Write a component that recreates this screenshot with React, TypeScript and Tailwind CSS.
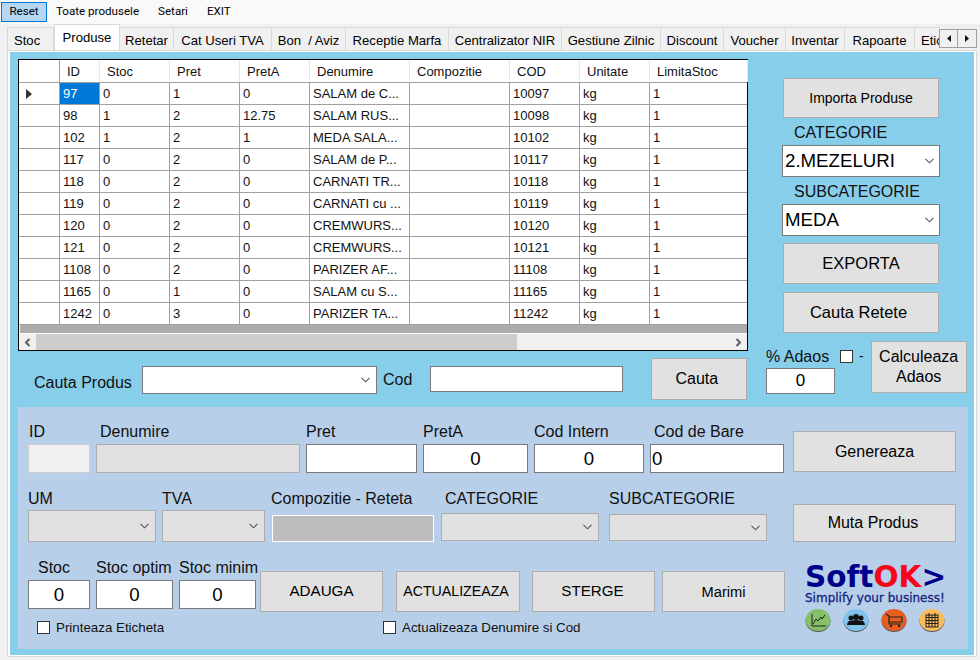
import React from 'react';

const sans = "font-['Liberation_Sans',Arial,sans-serif]";
const btn = "bg-[#e1e1e1] border border-[#adadad] text-black flex items-center justify-center text-center shrink-0";
const inputBox = "bg-white border border-[#7a7a7a] text-black shrink-0 flex items-center";
const disabledBox = "bg-[#e1e1e1] border border-[#adadad] shrink-0 flex items-center justify-end";

const tabs = [
    { label: 'Stoc', cls: 'w-[47px]' },
    { label: 'Retetar', cls: 'w-[54px]' },
    { label: 'Cat Useri TVA', cls: 'w-[98px]' },
    { label: 'Bon  / Aviz', cls: 'w-[74px]' },
    { label: 'Receptie Marfa', cls: 'w-[103px]' },
    { label: 'Centralizator NIR', cls: 'w-[113px]' },
    { label: 'Gestiune Zilnic', cls: 'w-[99px]' },
    { label: 'Discount', cls: 'w-[63px]' },
    { label: 'Voucher', cls: 'w-[62px]' },
    { label: 'Inventar', cls: 'w-[59px]' },
    { label: 'Rapoarte', cls: 'w-[70px]' },
];

const columns = [
    { label: 'ID', cls: 'w-[40px]' },
    { label: 'Stoc', cls: 'w-[70px]' },
    { label: 'Pret', cls: 'w-[70px]' },
    { label: 'PretA', cls: 'w-[70px]' },
    { label: 'Denumire', cls: 'w-[100px]' },
    { label: 'Compozitie', cls: 'w-[100px]' },
    { label: 'COD', cls: 'w-[70px]' },
    { label: 'Unitate', cls: 'w-[70px]' },
    { label: 'LimitaStoc', cls: 'w-[98px]' },
];

const rows = [
    ['97', '0', '1', '0', 'SALAM de C...', '', '10097', 'kg', '1'],
    ['98', '1', '2', '12.75', 'SALAM RUS...', '', '10098', 'kg', '1'],
    ['102', '1', '2', '1', 'MEDA SALA...', '', '10102', 'kg', '1'],
    ['117', '0', '2', '0', 'SALAM de P...', '', '10117', 'kg', '1'],
    ['118', '0', '2', '0', 'CARNATI TR...', '', '10118', 'kg', '1'],
    ['119', '0', '2', '0', 'CARNATI cu ...', '', '10119', 'kg', '1'],
    ['120', '0', '2', '0', 'CREMWURS...', '', '10120', 'kg', '1'],
    ['121', '0', '2', '0', 'CREMWURS...', '', '10121', 'kg', '1'],
    ['1108', '0', '2', '0', 'PARIZER AF...', '', '11108', 'kg', '1'],
    ['1165', '0', '1', '0', 'SALAM cu S...', '', '11165', 'kg', '1'],
    ['1242', '0', '3', '0', 'PARIZER TA...', '', '11242', 'kg', '1'],
];

const Chevron = ({ cls = 'mr-[6px]' }: { cls?: string }) => (
    <svg width="9" height="6" viewBox="0 0 9 6" className={`shrink-0 ${cls}`}>
        <path d="M0.5 0.8 L4.5 4.8 L8.5 0.8" fill="none" stroke="#555" strokeWidth="1.1" />
    </svg>
);

const CheckBox = () => <span className="block w-[13px] h-[13px] bg-white border border-[#333] shrink-0" />;

const DataGrid = () => (
    <div className="w-[730px] h-[292px] border border-black bg-white flex flex-col">
        <div className="flex h-[23px] border-b border-[#a0a0a0] pl-[1px]">
            <div className="w-[40px] border-r border-[#a0a0a0] shrink-0" />
            {columns.map((c) => (
                <div key={c.label} className={`${c.cls} shrink-0 border-r border-[#e6e6e6] pl-[7px] text-[13px] leading-[24px] text-[#111]`}>
                    {c.label}
                </div>
            ))}
        </div>
        {rows.map((row, i) => (
            <div key={row[0]} className="flex h-[22px] border-b border-[#a0a0a0] pl-[1px]">
                <div className="w-[40px] shrink-0 border-r border-[#a0a0a0] flex items-center pl-[6px]">
                    {i === 0 && (
                        <svg width="6" height="10" viewBox="0 0 6 10"><path d="M0 0 L6 5 L0 10 Z" fill="#333" /></svg>
                    )}
                </div>
                {row.map((cell, j) => (
                    <div
                        key={j}
                        className={`${columns[j].cls} shrink-0 pl-[3px] text-[13px] leading-[22px] whitespace-nowrap overflow-hidden ${j < 8 ? 'border-r border-[#a0a0a0]' : ''} ${i === 0 && j === 0 ? 'bg-[#0078d7] text-white' : 'text-[#111]'}`}
                    >
                        {cell}
                    </div>
                ))}
            </div>
        ))}
        <div className="h-[8px] bg-[#ababab] ml-[1px]" />
        <div className="h-[16px] mt-[1px] bg-[#f0f0f0] flex items-center">
            <div className="w-[17px] flex justify-center">
                <svg width="7" height="9" viewBox="0 0 7 9"><path d="M5.5 1 L2 4.5 L5.5 8" fill="none" stroke="#606060" strokeWidth="2" /></svg>
            </div>
            <div className="w-[481px] h-[16px] bg-[#cdcdcd]" />
            <div className="flex-1" />
            <div className="w-[17px] flex justify-center">
                <svg width="7" height="9" viewBox="0 0 7 9"><path d="M1.5 1 L5 4.5 L1.5 8" fill="none" stroke="#606060" strokeWidth="2" /></svg>
            </div>
        </div>
    </div>
);

const Logo = () => (
    <div className="flex flex-col w-[142px] ml-[20px] mt-[-14px]">
        <div className="font-['DejaVu_Sans',sans-serif] font-bold text-[29.5px] leading-[28px] text-[#00008b] whitespace-nowrap">
            Soft<span className="text-[#f5061d]">OK</span>&gt;
        </div>
        <div className="font-['DejaVu_Sans',sans-serif] text-[12px] leading-[15px] text-[#14237f] whitespace-nowrap [-webkit-text-stroke:0.3px_#14237f]">
            Simplify your business!
        </div>
        <div className="flex gap-[12px] mt-[3px]">
            <svg width="26" height="23" viewBox="0 0 26 23">
                <ellipse cx="13" cy="12" rx="12.5" ry="11" fill="#555" />
                <ellipse cx="13" cy="11" rx="12.5" ry="11" fill="#86c06b" />
                <path d="M7 5 V17 H21" fill="none" stroke="#222" strokeWidth="1" />
                <path d="M8 15 L11 10 L13 12 L16 8 L17 10 L20 6" fill="none" stroke="#222" strokeWidth="1" />
            </svg>
            <svg width="26" height="23" viewBox="0 0 26 23">
                <ellipse cx="13" cy="12" rx="12.5" ry="11" fill="#555" />
                <ellipse cx="13" cy="11" rx="12.5" ry="11" fill="#7fc4ea" />
                <circle cx="8" cy="9" r="2.5" fill="#111" />
                <circle cx="18" cy="9" r="2.5" fill="#111" />
                <circle cx="13" cy="8" r="3" fill="#111" />
                <path d="M4 16 Q5 11 8 12 Q13 10 18 12 Q21 11 22 16 Z" fill="#111" />
            </svg>
            <svg width="26" height="23" viewBox="0 0 26 23">
                <ellipse cx="13" cy="12" rx="12.5" ry="11" fill="#555" />
                <ellipse cx="13" cy="11" rx="12.5" ry="11" fill="#e85d20" />
                <path d="M5 5 L8 7 V15 H20 M8 8 H21 V13 H8" fill="none" stroke="#222" strokeWidth="1.2" />
                <circle cx="10" cy="17" r="1.2" fill="#222" />
                <circle cx="18" cy="17" r="1.2" fill="#222" />
            </svg>
            <svg width="26" height="23" viewBox="0 0 26 23">
                <ellipse cx="13" cy="12" rx="12.5" ry="11" fill="#555" />
                <ellipse cx="13" cy="11" rx="12.5" ry="11" fill="#fbbc5c" />
                <rect x="7" y="6" width="12" height="12" fill="none" stroke="#222" strokeWidth="1" />
                <path d="M7 8.5 H19 M7 11.5 H19 M7 14.5 H19 M10 6 V18 M13 6 V18 M16 6 V18 M10 4 V7 M16 4 V7" stroke="#222" strokeWidth="1" />
            </svg>
        </div>
    </div>
);

const App: React.FC = () => {
    return (
        <div className={`${sans} w-[980px] h-[660px] bg-[#f0f0f0] overflow-hidden flex flex-col`}>
            {/* menu */}
            <div className="h-[24px] bg-[#f9f9f9] flex items-center pl-[1px] text-[11.6px] font-['Roboto',sans-serif] text-black shrink-0">
                <div className="w-[46px] h-[20px] bg-[#b5d7f3] border border-[#0078d7] flex items-center justify-center">Reset</div>
                <span className="ml-[9px]">Toate produsele</span>
                <span className="ml-[19px]">Setari</span>
                <span className="ml-[19px]">EXIT</span>
            </div>

            {/* tabs */}
            <div className="h-[26px] flex items-end pl-[7px] text-[13.1px] text-black shrink-0 relative">
                <div className={`${tabs[0].cls} h-[23px] bg-[#f0f0f0] border border-[#d9d9d9] border-b-0 pl-[6px] leading-[25px]`}>{tabs[0].label}</div>
                <div className="w-[66px] h-[26px] bg-white border border-[#d9d9d9] border-b-0 text-center leading-[26px]">Produse</div>
                {tabs.slice(1).map((t) => (
                    <div key={t.label} className={`${t.cls} h-[23px] bg-[#f0f0f0] border-r border-t border-[#d9d9d9] text-center leading-[25px] whitespace-pre shrink-0`}>{t.label}</div>
                ))}
                <div className="w-[25px] h-[23px] bg-[#f0f0f0] border-t border-[#d9d9d9] pl-[6px] leading-[25px] whitespace-nowrap shrink-0">Etic</div>
                <div className="absolute left-[939px] top-[5px] flex">
                    <div className="w-[19px] h-[19px] bg-[#f0f0f0] border border-[#a0a0a0] flex items-center justify-center">
                        <svg width="4" height="7" viewBox="0 0 4 7"><path d="M4 0 L0 3.5 L4 7 Z" fill="#111" /></svg>
                    </div>
                    <div className="w-[19px] h-[19px] bg-[#f0f0f0] border border-l-0 border-[#a0a0a0] flex items-center justify-center">
                        <svg width="4" height="7" viewBox="0 0 4 7"><path d="M0 0 L4 3.5 L0 7 Z" fill="#111" /></svg>
                    </div>
                </div>
            </div>

            {/* tab page */}
            <div className="ml-[7px] w-[970px] h-[607px] border border-[#d9d9d9] bg-white pl-[2px] pt-[1px] shrink-0">
                <div className="w-[964px] h-[603px] bg-[#87ceeb] pl-[8px] pt-[7px] flex flex-col">
                    <div className="flex h-[348px] shrink-0">
                        <div className="w-[730px] shrink-0 flex flex-col">
                            <DataGrid />
                            <div className="flex items-start">
                                <span className="ml-[16px] mt-[20px] w-[108px] text-[16px] text-[#111] whitespace-nowrap">Cauta Produs</span>
                                <div className={`${inputBox} mt-[15px] w-[235px] h-[28px] justify-end`}>
                                    <Chevron />
                                </div>
                                <span className="ml-[6px] mt-[17px] text-[16px] text-[#111]">Cod</span>
                                <div className={`${inputBox} ml-[18px] mt-[15px] w-[193px] h-[26px]`} />
                                <div className={`${btn} ml-[28px] mt-[7px] w-[96px] h-[42px] text-[16px] pr-[5px]`}>Cauta</div>
                            </div>
                        </div>
                        <div className="flex-1 flex flex-col">
                            <div className={`${btn} ml-[35px] mt-[19px] w-[156px] h-[40px] text-[14px]`}>Importa Produse</div>
                            <span className="ml-[46px] mt-[6px] text-[16px] leading-[18px] text-[#111]">CATEGORIE</span>
                            <div className={`${inputBox} ml-[34px] mt-[3px] w-[158px] h-[32px] justify-between pl-[2px] text-[18.67px]`}>
                                2.MEZELURI<Chevron cls="mr-[5px]" />
                            </div>
                            <span className="ml-[46px] mt-[6px] text-[16px] leading-[18px] text-[#111]">SUBCATEGORIE</span>
                            <div className={`${inputBox} ml-[34px] mt-[3px] w-[158px] h-[32px] justify-between pl-[2px] text-[18.67px]`}>
                                MEDA<Chevron cls="mr-[5px]" />
                            </div>
                            <div className={`${btn} ml-[35px] mt-[7px] w-[156px] h-[41px] text-[16.5px]`}>EXPORTA</div>
                            <div className={`${btn} ml-[35px] mt-[8px] w-[156px] h-[41px] text-[16.5px] pr-[5px]`}>Cauta Retete</div>
                            <div className="flex ml-[18px] mt-[7px]">
                                <div className="flex flex-col w-[70px] pt-[8px]">
                                    <span className="text-[16px] leading-[18px] text-[#111] whitespace-nowrap">% Adaos</span>
                                    <div className={`${inputBox} mt-[2px] w-[69px] h-[26px] justify-center text-[17px]`}>0</div>
                                </div>
                                <div className="ml-[4px] mt-[10px]"><CheckBox /></div>
                                <span className="ml-[6px] mt-[6px] text-[14px] text-[#111]">-</span>
                                <div className={`${btn} ml-[7px] mt-[1px] w-[96px] h-[52px] text-[16px] leading-[20px]`}>Calculeaza<br />Adaos</div>
                            </div>
                        </div>
                    </div>

                    {/* product form */}
                    <div className="w-[950px] h-[242px] bg-[#b8cfe9] shrink-0 flex flex-col text-[16px] text-[#111] pl-[10px]">
                        <div className="flex mt-[16px] h-[18px] leading-[18px]">
                            <span className="ml-[1px] w-[71px]">ID</span>
                            <span className="w-[206px]">Denumire</span>
                            <span className="w-[117px]">Pret</span>
                            <span className="w-[111px]">PretA</span>
                            <span className="w-[120px]">Cod Intern</span>
                            <span>Cod de Bare</span>
                        </div>
                        <div className="flex items-start h-[45px]">
                            <div className="w-[62px] h-[29px] mt-[3px] bg-[#f0f0f0] border border-[#cfcfcf] shrink-0" />
                            <div className="ml-[6px] w-[204px] h-[29px] mt-[3px] bg-[#e1e1e1] border border-[#adadad] shrink-0" />
                            <div className={`${inputBox} ml-[6px] mt-[3px] w-[111px] h-[29px]`} />
                            <div className={`${inputBox} ml-[6px] mt-[3px] w-[105px] h-[29px] justify-center text-[18.67px]`}>0</div>
                            <div className={`${inputBox} ml-[6px] mt-[3px] w-[110px] h-[29px] justify-center text-[18.67px]`}>0</div>
                            <div className={`${inputBox} ml-[6px] mt-[3px] w-[134px] h-[29px] pl-[1px] text-[18.67px]`}>0</div>
                            <div className={`${btn} ml-[9px] mt-[-10px] w-[163px] h-[41px]`}>Genereaza</div>
                        </div>
                        <div className="flex mt-[4px] h-[18px] leading-[18px]">
                            <span className="w-[134px]">UM</span>
                            <span className="w-[109px]">TVA</span>
                            <span className="w-[174px]">Compozitie - Reteta</span>
                            <span className="w-[164px]">CATEGORIE</span>
                            <span>SUBCATEGORIE</span>
                        </div>
                        <div className="flex items-start h-[52px]">
                            <div className={`${disabledBox} mt-[2px] w-[128px] h-[32px]`}><Chevron /></div>
                            <div className={`${disabledBox} ml-[6px] mt-[2px] w-[103px] h-[32px]`}><Chevron /></div>
                            <div className="ml-[7px] mt-[7px] w-[162px] h-[27px] bg-[#bdbdbd] border border-white shrink-0" />
                            <div className={`${disabledBox} ml-[7px] mt-[5px] w-[158px] h-[28px]`}><Chevron /></div>
                            <div className={`${disabledBox} ml-[10px] mt-[6px] w-[158px] h-[27px]`}><Chevron /></div>
                            <div className={`${btn} ml-[26px] mt-[-4px] w-[163px] h-[38px] pr-[3px]`}>Muta Produs</div>
                        </div>
                        <div className="flex h-[18px] leading-[18px] mt-[-1px]">
                            <span className="ml-[10px] w-[58px]">Stoc</span>
                            <span className="w-[83px]">Stoc optim</span>
                            <span>Stoc minim</span>
                        </div>
                        <div className="flex items-start h-[43px]">
                            <div className={`${inputBox} mt-[3px] w-[62px] h-[29px] justify-center text-[18.67px]`}>0</div>
                            <div className={`${inputBox} ml-[6px] mt-[3px] w-[77px] h-[29px] justify-center text-[18.67px]`}>0</div>
                            <div className={`${inputBox} ml-[6px] mt-[3px] w-[77px] h-[29px] justify-center text-[18.67px]`}>0</div>
                            <div className={`${btn} ml-[4px] mt-[-6px] w-[123px] h-[41px] text-[15.2px]`}>ADAUGA</div>
                            <div className={`${btn} ml-[13px] mt-[-6px] w-[124px] h-[41px] text-[14.2px] pr-[4px]`}>ACTUALIZEAZA</div>
                            <div className={`${btn} ml-[12px] mt-[-6px] w-[123px] h-[41px] text-[15.2px] pr-[2px]`}>STERGE</div>
                            <div className={`${btn} ml-[7px] mt-[-6px] w-[123px] h-[41px] text-[14.67px]`}>Marimi</div>
                            <Logo />
                        </div>
                        <div className="flex items-center h-[13px] mt-[1px] text-[13.33px]">
                            <span className="ml-[9px]"><CheckBox /></span>
                            <span className="ml-[6px] w-[327px] whitespace-nowrap">Printeaza Eticheta</span>
                            <CheckBox />
                            <span className="ml-[6px] whitespace-nowrap">Actualizeaza Denumire si Cod</span>
                        </div>
                    </div>
                </div>
            </div>
        </div>
    );
};

export default App;
